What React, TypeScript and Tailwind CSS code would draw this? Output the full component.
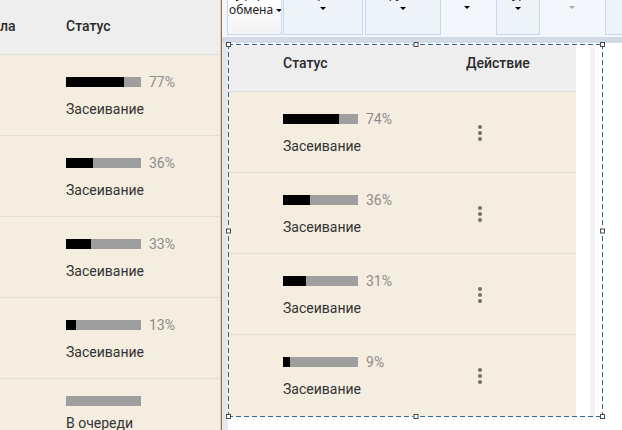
import React from "react";

const font = { fontFamily: "Roboto, 'Noto Sans', sans-serif" };

function Bar({ pct }: { pct: number }) {
  return (
    <div className="relative w-[75px] h-[10px] bg-[#9e9e9e]">
      <div className="absolute left-0 top-0 h-full bg-black" style={{ width: `${Math.round((pct / 100) * 75)}px` }} />
    </div>
  );
}

function StatusCell({ pct, label }: { pct?: number; label: string }) {
  return (
    <div className="flex flex-col">
      <div className="flex items-center gap-[8px]">
        <Bar pct={pct ?? 0} />
        {pct !== undefined && (
          <span className="text-[14px] leading-[20px] text-[#8c8c8c]">{pct}%</span>
        )}
      </div>
      <div className="mt-[7px] text-[14px] leading-[20px] text-[#333333]">{label}</div>
    </div>
  );
}

function Kebab() {
  return (
    <div className="flex flex-col gap-[2px]">
      <div className="w-[4px] h-[4px] rounded-full bg-[#707070]" />
      <div className="w-[4px] h-[4px] rounded-full bg-[#707070]" />
      <div className="w-[4px] h-[4px] rounded-full bg-[#707070]" />
    </div>
  );
}

function Tri({ grey }: { grey?: boolean }) {
  return (
    <div
      className={
        grey
          ? "w-0 h-0 border-l-[3px] border-r-[3px] border-t-[3px] border-l-transparent border-r-transparent border-t-[#a8a8a8]"
          : "w-0 h-0 border-l-[3px] border-r-[3px] border-t-[3px] border-l-transparent border-r-transparent border-t-black"
      }
    />
  );
}

function Handle({ cls }: { cls: string }) {
  return <div className={"absolute z-10 w-[5px] h-[5px] bg-white border border-[#4a4a4a] " + cls} />;
}

const leftRows = [
  { pct: 77, label: "Засеивание" },
  { pct: 36, label: "Засеивание" },
  { pct: 33, label: "Засеивание" },
  { pct: 13, label: "Засеивание" },
  { pct: undefined, label: "В очереди" },
];

const rightRows = [74, 36, 31, 9];

export default function App() {
  return (
    <div className="w-[622px] h-[430px] overflow-hidden flex bg-white" style={font}>
      {/* Left panel */}
      <div className="w-[220px] shrink-0 flex flex-col bg-[#f5ede0]">
        <div className="h-[55px] shrink-0 bg-[#eeeeee] border-b border-[#dedede] flex pt-[16px] text-[14px] leading-[20px] font-medium text-[#2a2a2a]">
          <div className="w-[66px] shrink-0">ла</div>
          <div>Статус</div>
        </div>
        {leftRows.map((r, i) => (
          <div key={i} className="h-[81px] shrink-0 border-b border-[#e4ddd1] flex pt-[17px]">
            <div className="w-[66px] shrink-0" />
            <StatusCell pct={r.pct} label={r.label} />
          </div>
        ))}
      </div>
      <div className="w-[1px] shrink-0 bg-[#d6d0c8]" />
      <div className="w-[1px] shrink-0 bg-[#a4653f]" />

      {/* Right panel */}
      <div className="flex-1 flex flex-col min-w-0">
        {/* Ribbon */}
        <div className="h-[37px] shrink-0 bg-[#f3f6fa] flex items-start pl-[5px] overflow-hidden text-[12px] text-[#222]" style={{ fontFamily: "'Noto Sans', 'Open Sans', sans-serif" }}>
          <div className="w-[55px] h-[36px] -mt-[1px] shrink-0 border border-[#c6d9ee] bg-gradient-to-b from-white to-[#f3f3f3] overflow-hidden">
            <div className="-mt-[14px] leading-[16px] pl-[1px]">
              <div>буфера</div>
              <div className="flex items-center gap-[3px]">
                <span>обмена</span>
                <Tri />
              </div>
            </div>
          </div>
          <div className="w-[80px] h-[36px] -mt-[1px] ml-[1px] shrink-0 border border-[#c6d9ee] bg-[#eef3f9] overflow-hidden flex flex-col items-center">
            <div className="-mt-[14px] leading-[16px]">Формат</div>
            <div className="mt-[5px]"><Tri /></div>
          </div>
          <div className="w-[76px] h-[36px] -mt-[1px] ml-[2px] shrink-0 border border-[#c6d9ee] bg-[#eef3f9] overflow-hidden flex flex-col items-center">
            <div className="-mt-[14px] leading-[16px]">Группа</div>
            <div className="mt-[5px]"><Tri /></div>
          </div>
          <div className="w-[55px] h-[36px] -mt-[1px] shrink-0 flex flex-col items-center pr-[4px]">
            <div className="mt-[7px]"><Tri /></div>
          </div>
          <div className="w-[44px] h-[36px] -mt-[1px] shrink-0 border border-[#c6d9ee] bg-[#eef3f9] overflow-hidden flex flex-col items-center">
            <div className="-mt-[14px] leading-[16px]">Курс</div>
            <div className="mt-[5px]"><Tri /></div>
          </div>
          <div className="w-[65px] h-[36px] -mt-[1px] shrink-0 flex flex-col items-center pr-[2px]">
            <div className="mt-[7px]"><Tri grey /></div>
          </div>
          <div className="w-[40px] h-[36px] -mt-[1px] shrink-0 border border-[#c6d9ee] bg-[#eef3f9]" />
        </div>
        <div className="h-[6px] shrink-0 bg-[#d2dbe5]" />

        {/* Canvas */}
        <div className="flex-1 flex bg-white">
          <div className="w-[6px] shrink-0 bg-[#e4e9ef]" />
          <div className="self-start mt-[1px] relative w-[375px] shrink-0 p-[1px] flex">
            <div className="w-[347px] shrink-0 flex flex-col bg-[#f5ede0]">
              <div className="h-[47px] shrink-0 bg-[#eeeeee] border-b border-[#dedede] flex pt-[8px] text-[14px] leading-[20px] font-medium text-[#2a2a2a]">
                <div className="w-[54px] shrink-0" />
                <div className="w-[183px] shrink-0">Статус</div>
                <div>Действие</div>
              </div>
              {rightRows.map((p, i) => (
                <div key={i} className={"h-[81px] shrink-0 flex pt-[17px] " + (i < 3 ? "border-b border-[#e4ddd1]" : "")}>
                  <div className="w-[54px] shrink-0" />
                  <div className="w-[183px] shrink-0">
                    <StatusCell pct={p} label="Засеивание" />
                  </div>
                  <div className="pl-[12px] mt-[16px]">
                    <Kebab />
                  </div>
                </div>
              ))}
            </div>
            <div className="flex-1 flex">
              <div className="w-[14px]" />
              <div className="w-[5px] bg-[#f3f3f3]" />
            </div>
            {/* dashed selection outline */}
            <div className="absolute left-0 right-0 top-0 h-[1px] bg-[repeating-linear-gradient(90deg,#2a6d98_0_5px,transparent_5px_8px)]" />
            <div className="absolute left-0 right-0 bottom-0 h-[1px] bg-[repeating-linear-gradient(90deg,#2a6d98_0_5px,transparent_5px_8px)]" />
            <div className="absolute top-0 bottom-0 left-0 w-[1px] bg-[repeating-linear-gradient(180deg,#2a6d98_0_5px,transparent_5px_8px)]" />
            <div className="absolute top-0 bottom-0 right-0 w-[1px] bg-[repeating-linear-gradient(180deg,#2a6d98_0_5px,transparent_5px_8px)]" />
            <Handle cls="-left-[2px] -top-[2px]" />
            <Handle cls="left-1/2 -translate-x-1/2 -top-[2px]" />
            <Handle cls="-right-[2px] -top-[2px]" />
            <Handle cls="-left-[2px] top-1/2 -translate-y-1/2" />
            <Handle cls="-right-[2px] top-1/2 -translate-y-1/2" />
            <Handle cls="-left-[2px] -bottom-[2px]" />
            <Handle cls="left-1/2 -translate-x-1/2 -bottom-[2px]" />
            <Handle cls="-right-[2px] -bottom-[2px]" />
          </div>
        </div>
      </div>
    </div>
  );
}
